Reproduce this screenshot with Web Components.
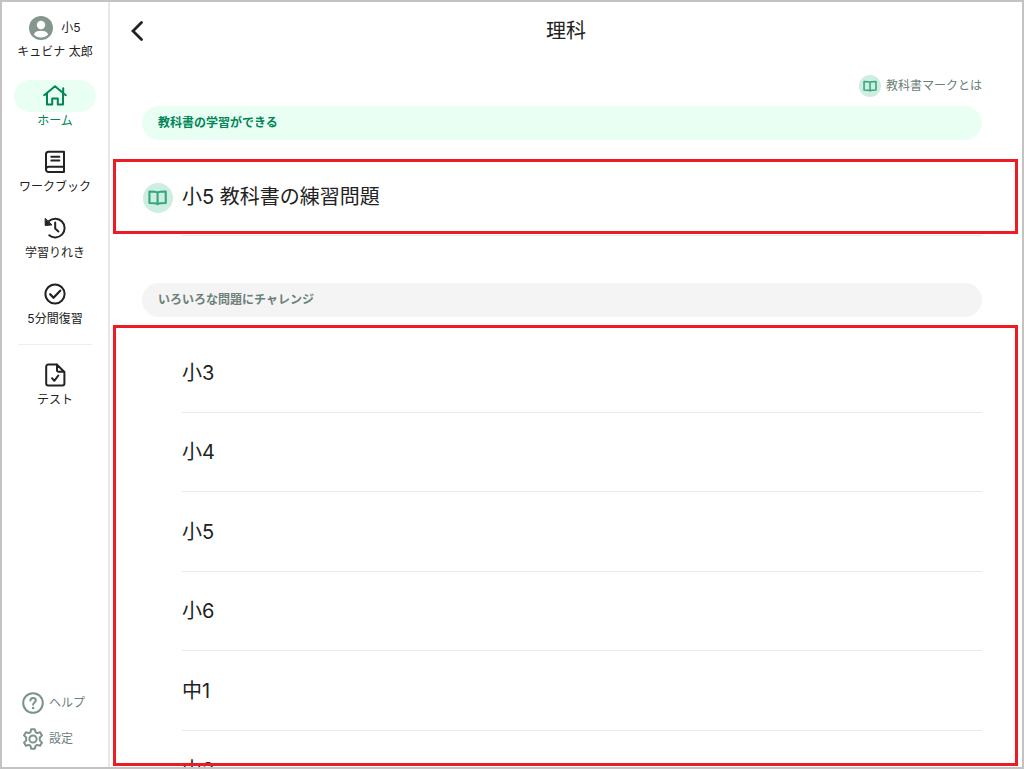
<!DOCTYPE html>
<html lang="ja">
<head>
<meta charset="utf-8">
<title>理科</title>
<style>
  body { margin: 0; font-family: Inter, "Noto Sans CJK JP", sans-serif; color: #222; background: #fff; }
</style>
</head>
<body>
<study-app></study-app>
<script>
const svg = (body, size = 24, width = 2) =>
  `<svg width="${size}" height="${size}" viewBox="0 0 24 24" fill="none" stroke="currentColor" stroke-width="${width}" stroke-linecap="round" stroke-linejoin="round" aria-hidden="true">${body}</svg>`;

const icons = {
  home: svg('<path d="M1.200 11.200 12 2.200l10.800 9M4 9.600V20.500h5.200v-6h5.600v6H20V9.600M20.200 8V4.200"/>'),
  book: svg('<path d="M21 1.700H5.600A2.600 2.600 0 0 0 3 4.300v15.200A2.600 2.600 0 0 0 5.600 22H21zM3 19.500a2.600 2.600 0 0 1 2.600-2.700H21M8.300 6.700h8M8.300 10.500h8"/>'),
  history: svg('<path d="M6 5A9.400 9.400 0 1 1 6.200 19.300M12.200 6.500v6.100l3.200 2.900"/><path d="M2.200 2.800v6.700l6.400-.6z" fill="currentColor" stroke-width="1"/>'),
  check: svg('<circle cx="12" cy="12" r="9.600"/><path d="m7.200 12.300 3.300 3.400 6.700-7" stroke-width="2.300"/>'),
  test: svg('<path d="M13.800 1.500H5.200a2 2 0 0 0-2 2v16.900a2 2 0 0 0 2 2h14.200a2 2 0 0 0 2-2V9zM14 1.500v5.700a1.500 1.500 0 0 0 1.500 1.500h5.800M9 15.200l2.300 2.600 4-5.300"/>'),
  help: svg('<circle cx="12" cy="12" r="9.800"/><path d="M9.400 9.500c.2-1.600 1.200-2.400 2.700-2.400 1.600 0 2.700.9 2.700 2.300 0 2-2.700 2.200-2.700 4.300"/><path d="M12.100 17v.1" stroke-width="2.500"/>'),
  gear: svg('<circle cx="12" cy="12" r="3.600"/><path d="M10.200 2.200h3.600l.7 2.900 1.700 1 2.900-.9 1.900 3.200-2.200 2.100v3l2.200 2.100-1.900 3.200-2.900-.9-1.700 1-.7 2.900h-3.600l-.7-2.900-1.700-1-2.900.9L3 15.600l2.200-2.100v-3L3 8.400l1.900-3.200 2.900.9 1.700-1z"/>'),
  back: svg('<path d="m15.500 3.500-8.500 8.500 8.500 8.500" stroke-linejoin="miter"/>', 24, 2.8)
};

function define(name, render) {
  customElements.define(name, class extends HTMLElement {
    connectedCallback() {
      if (this.shadowRoot) return;
      this.attachShadow({ mode: 'open' }).innerHTML = render(this);
    }
  });
}

define('nav-item', el => `
  <style>
    :host { display: block; }
    a { display: flex; flex-direction: column; align-items: center; padding-bottom: 2px; color: inherit; text-decoration: none; font-size: 12px; line-height: 18px; }
    .icon { display: flex; align-items: center; justify-content: center; width: 82px; height: 32px; border-radius: 16px; }
    :host([active]) a { color: #008656; }
    :host([active]) .icon { background: #e9fff4; }
  </style>
  <a href="#${el.getAttribute('icon')}"><span class="icon">${icons[el.getAttribute('icon')]}</span><slot></slot></a>`);

define('utility-link', el => `
  <style>
    :host { display: block; }
    a { display: flex; align-items: center; gap: 4px; color: #7d9289; text-decoration: none; font-size: 12px; line-height: 24px; }
    span { color: #6c8078; }
  </style>
  <a href="#${el.getAttribute('icon')}">${icons[el.getAttribute('icon')]}<span><slot></slot></span></a>`);

define('side-bar', () => `
  <style>
    :host { display: flex; flex-direction: column; align-items: center; box-sizing: border-box; width: 108px; flex: none; border-right: 2px solid #e3eae8; padding: 14px 0 16px; }
    .user { display: flex; flex-direction: column; align-items: center; font-size: 12px; line-height: 24px; }
    .grade { display: flex; align-items: center; gap: 8px; }
    nav { display: flex; flex-direction: column; gap: 14px; margin-top: 16px; }
    hr { width: 74px; height: 1px; margin: 0 auto; border: 0; background: #ebefed; }
    .tools { display: flex; flex-direction: column; gap: 12px; margin-top: auto; align-self: stretch; padding-left: 19px; }
  </style>
  <div class="user">
    <span class="grade"><svg width="24" height="24" viewBox="0 0 24 24" aria-hidden="true"><circle cx="12" cy="12" r="12" fill="#84978f"/><circle cx="12" cy="9" r="4.200" fill="#fff"/><path d="M4.800 18.600c1-2.900 3.800-3.900 7.200-3.900s6.200 1 7.200 3.900c-1.800 2-4.300 3-7.200 3s-5.400-1-7.200-3z" fill="#fff"/></svg>小5</span>
    <span>キュビナ 太郎</span>
  </div>
  <nav>
    <nav-item icon="home" active>ホーム</nav-item>
    <nav-item icon="book">ワークブック</nav-item>
    <nav-item icon="history">学習りれき</nav-item>
    <nav-item icon="check">5分間復習</nav-item>
    <hr>
    <nav-item icon="test">テスト</nav-item>
  </nav>
  <div class="tools">
    <utility-link icon="help">ヘルプ</utility-link>
    <utility-link icon="gear">設定</utility-link>
  </div>`);

define('textbook-mark', () => `
  <style>
    :host { display: flex; align-items: center; justify-content: center; flex: none; width: var(--mark, 22px); height: var(--mark, 22px); border-radius: 50%; background: #cdeee0; color: #36a67e; }
    svg { width: 64%; height: 64%; }
  </style>
  <svg viewBox="0 0 20 20" fill="none" stroke="currentColor" stroke-width="2.200" stroke-linejoin="round" aria-hidden="true"><path d="M10 4.800C8.500 3.800 5 3.600 1.500 3.600v12c3.500 0 7 .1 8.500 1.200 1.500-1.100 5-1.200 8.500-1.200v-12C15 3.600 11.500 3.800 10 4.800zv12"/></svg>`);

define('section-label', () => `
  <style>
    :host { display: block; margin: 0 40px 0 32px; border-radius: 17px; background: #f4f4f4; color: #6c8078; }
    :host([tone="green"]) { background: #e9fff4; color: #008656; }
    h2 { margin: 0; padding: 0 16px; font-size: 12px; line-height: 34px; font-weight: 700; }
  </style>
  <h2><slot></slot></h2>`);

define('framed-group', () => `
  <style>
    :host { display: block; position: relative; box-sizing: border-box; margin: 0 4px 0 3px; }
    :host::after { content: ""; position: absolute; inset: 0; border: 3px solid #ed1c24; pointer-events: none; }
  </style>
  <slot></slot>`);

define('unit-row', () => `
  <style>
    :host { display: flex; align-items: center; box-sizing: border-box; padding: 0 36px 0 30px; }
    .lead { display: flex; width: 39px; align-self: stretch; align-items: center; flex: none; --mark: 30px; }
    a { flex: 1; display: flex; align-items: center; align-self: stretch; border-bottom: 1px solid #e6ebe9; color: inherit; text-decoration: none; font-size: 20px; line-height: 28px; }
  </style>
  <span class="lead"><slot name="mark"></slot></span><a href="#unit"><slot></slot></a>`);

define('study-app', () => `
  <style>
    :host { display: flex; box-sizing: border-box; height: 100vh; border: 2px solid #c3c3c3; overflow: hidden; }
    main { flex: 1; min-width: 0; display: flex; flex-direction: column; overflow: hidden; }
    header { display: grid; grid-template-columns: 56px 1fr 56px; align-items: center; height: 58px; flex: none; }
    button { display: flex; justify-content: center; border: 0; padding: 0; background: none; color: #222; }
    h1 { margin: 0; text-align: center; font-size: 20px; line-height: 28px; font-weight: 400; }
    .about { display: flex; align-items: center; align-self: flex-end; gap: 5px; margin: 14px 40px 8px; font-size: 12px; line-height: 24px; color: #6c8078; text-decoration: none; }
    .book { margin-top: 19px; height: 75px; flex: none; }
    .book unit-row { height: 77px; margin-bottom: -2px; }
    .book { display: flex; flex-direction: column; justify-content: flex-end; }
    .other { margin-top: 49px; }
    .list { margin-top: 8px; margin-bottom: 1px; flex: 1; min-height: 0; }
    .rows { display: grid; grid-auto-rows: 80px 79px; padding-top: 8px; }
  </style>
  <side-bar></side-bar>
  <main>
    <header><button type="button" aria-label="戻る">${icons.back}</button><h1>理科</h1></header>
    <a class="about" href="#mark"><textbook-mark></textbook-mark>教科書マークとは</a>
    <section-label tone="green">教科書の学習ができる</section-label>
    <framed-group class="book">
      <unit-row><textbook-mark slot="mark"></textbook-mark>小5 教科書の練習問題</unit-row>
    </framed-group>
    <section-label class="other">いろいろな問題にチャレンジ</section-label>
    <framed-group class="list">
      <div class="rows">
        <unit-row>小3</unit-row>
        <unit-row>小4</unit-row>
        <unit-row>小5</unit-row>
        <unit-row>小6</unit-row>
        <unit-row>中1</unit-row>
        <unit-row>中2</unit-row>
      </div>
    </framed-group>
  </main>`);
</script>
</body>
</html>
